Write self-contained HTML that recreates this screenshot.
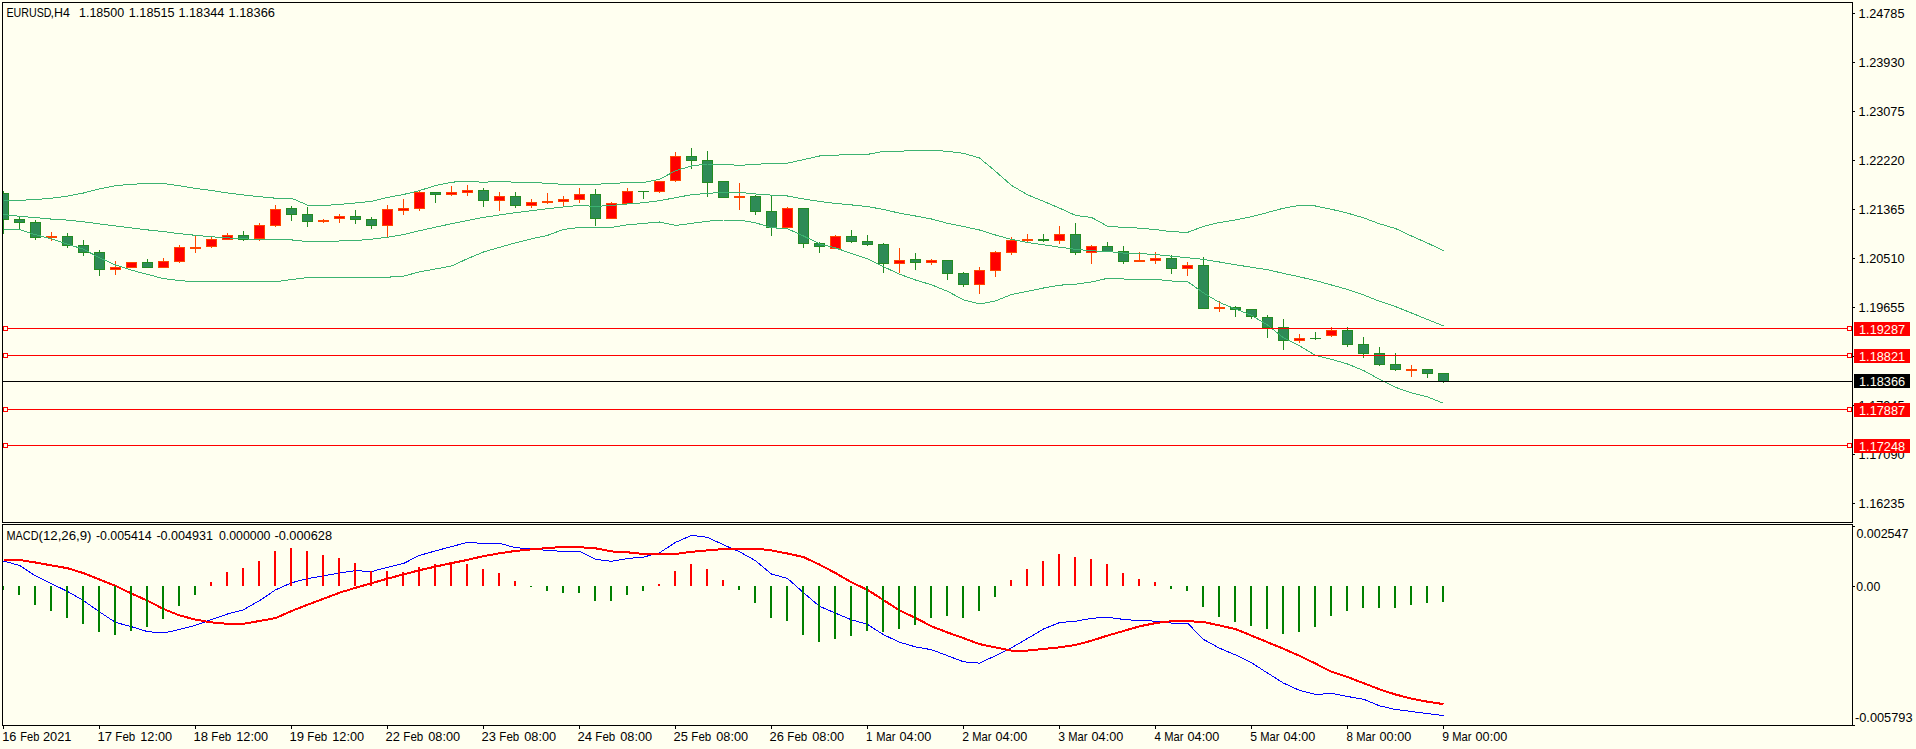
<!DOCTYPE html>
<html><head><meta charset="utf-8"><title>EURUSD,H4</title>
<style>html,body{margin:0;padding:0;background:#FFFFF0;width:1916px;height:749px;overflow:hidden}svg{display:block}</style>
</head><body>
<svg width="1916" height="749" viewBox="0 0 1916 749"><rect x="0" y="0" width="1916" height="749" fill="#FFFFF0"/>
<defs><clipPath id="cm"><rect x="3" y="3" width="1849" height="519"/></clipPath><clipPath id="cs"><rect x="3" y="525" width="1849" height="200"/></clipPath></defs>
<g clip-path="url(#cm)" shape-rendering="crispEdges">
<rect x="3" y="191" width="1" height="43" fill="#228B22"/>
<rect x="-2" y="193" width="11" height="27" fill="#228B22"/>
<rect x="-1" y="194" width="9" height="25" fill="#2E8B57"/>
<rect x="19" y="217" width="1" height="12" fill="#228B22"/>
<rect x="14" y="219" width="11" height="4" fill="#228B22"/>
<rect x="15" y="220" width="9" height="2" fill="#2E8B57"/>
<rect x="35" y="220" width="1" height="20" fill="#228B22"/>
<rect x="30" y="222" width="11" height="16" fill="#228B22"/>
<rect x="31" y="223" width="9" height="14" fill="#2E8B57"/>
<rect x="51" y="232" width="1" height="9" fill="#FF4500"/>
<rect x="46" y="236" width="11" height="2" fill="#FF4500"/>
<rect x="67" y="233" width="1" height="15" fill="#228B22"/>
<rect x="62" y="236" width="11" height="10" fill="#228B22"/>
<rect x="63" y="237" width="9" height="8" fill="#2E8B57"/>
<rect x="83" y="240" width="1" height="16" fill="#228B22"/>
<rect x="78" y="245" width="11" height="8" fill="#228B22"/>
<rect x="79" y="246" width="9" height="6" fill="#2E8B57"/>
<rect x="99" y="250" width="1" height="26" fill="#228B22"/>
<rect x="94" y="252" width="11" height="18" fill="#228B22"/>
<rect x="95" y="253" width="9" height="16" fill="#2E8B57"/>
<rect x="115" y="261" width="1" height="14" fill="#FF4500"/>
<rect x="110" y="267" width="11" height="3" fill="#FF4500"/>
<rect x="111" y="268" width="9" height="1" fill="#FF0000"/>
<rect x="131" y="262" width="1" height="6" fill="#FF4500"/>
<rect x="126" y="262" width="11" height="6" fill="#FF4500"/>
<rect x="127" y="263" width="9" height="4" fill="#FF0000"/>
<rect x="147" y="259" width="1" height="9" fill="#228B22"/>
<rect x="142" y="262" width="11" height="6" fill="#228B22"/>
<rect x="143" y="263" width="9" height="4" fill="#2E8B57"/>
<rect x="163" y="258" width="1" height="10" fill="#FF4500"/>
<rect x="158" y="261" width="11" height="7" fill="#FF4500"/>
<rect x="159" y="262" width="9" height="5" fill="#FF0000"/>
<rect x="179" y="245" width="1" height="18" fill="#FF4500"/>
<rect x="174" y="247" width="11" height="15" fill="#FF4500"/>
<rect x="175" y="248" width="9" height="13" fill="#FF0000"/>
<rect x="195" y="236" width="1" height="17" fill="#FF4500"/>
<rect x="190" y="247" width="11" height="2" fill="#FF4500"/>
<rect x="211" y="237" width="1" height="11" fill="#FF4500"/>
<rect x="206" y="239" width="11" height="8" fill="#FF4500"/>
<rect x="207" y="240" width="9" height="6" fill="#FF0000"/>
<rect x="227" y="233" width="1" height="7" fill="#FF4500"/>
<rect x="222" y="235" width="11" height="5" fill="#FF4500"/>
<rect x="223" y="236" width="9" height="3" fill="#FF0000"/>
<rect x="243" y="231" width="1" height="10" fill="#228B22"/>
<rect x="238" y="235" width="11" height="5" fill="#228B22"/>
<rect x="239" y="236" width="9" height="3" fill="#2E8B57"/>
<rect x="259" y="223" width="1" height="18" fill="#FF4500"/>
<rect x="254" y="225" width="11" height="14" fill="#FF4500"/>
<rect x="255" y="226" width="9" height="12" fill="#FF0000"/>
<rect x="275" y="205" width="1" height="22" fill="#FF4500"/>
<rect x="270" y="209" width="11" height="17" fill="#FF4500"/>
<rect x="271" y="210" width="9" height="15" fill="#FF0000"/>
<rect x="291" y="206" width="1" height="15" fill="#228B22"/>
<rect x="286" y="208" width="11" height="7" fill="#228B22"/>
<rect x="287" y="209" width="9" height="5" fill="#2E8B57"/>
<rect x="307" y="207" width="1" height="20" fill="#228B22"/>
<rect x="302" y="214" width="11" height="8" fill="#228B22"/>
<rect x="303" y="215" width="9" height="6" fill="#2E8B57"/>
<rect x="323" y="219" width="1" height="4" fill="#FF4500"/>
<rect x="318" y="220" width="11" height="2" fill="#FF4500"/>
<rect x="339" y="214" width="1" height="9" fill="#FF4500"/>
<rect x="334" y="216" width="11" height="3" fill="#FF4500"/>
<rect x="335" y="217" width="9" height="1" fill="#FF0000"/>
<rect x="355" y="210" width="1" height="14" fill="#228B22"/>
<rect x="350" y="216" width="11" height="4" fill="#228B22"/>
<rect x="351" y="217" width="9" height="2" fill="#2E8B57"/>
<rect x="371" y="217" width="1" height="12" fill="#228B22"/>
<rect x="366" y="219" width="11" height="7" fill="#228B22"/>
<rect x="367" y="220" width="9" height="5" fill="#2E8B57"/>
<rect x="387" y="205" width="1" height="32" fill="#FF4500"/>
<rect x="382" y="209" width="11" height="17" fill="#FF4500"/>
<rect x="383" y="210" width="9" height="15" fill="#FF0000"/>
<rect x="403" y="199" width="1" height="16" fill="#FF4500"/>
<rect x="398" y="208" width="11" height="3" fill="#FF4500"/>
<rect x="399" y="209" width="9" height="1" fill="#FF0000"/>
<rect x="419" y="191" width="1" height="20" fill="#FF4500"/>
<rect x="414" y="192" width="11" height="17" fill="#FF4500"/>
<rect x="415" y="193" width="9" height="15" fill="#FF0000"/>
<rect x="435" y="192" width="1" height="11" fill="#228B22"/>
<rect x="430" y="192" width="11" height="3" fill="#228B22"/>
<rect x="431" y="193" width="9" height="1" fill="#2E8B57"/>
<rect x="451" y="186" width="1" height="10" fill="#FF4500"/>
<rect x="446" y="192" width="11" height="3" fill="#FF4500"/>
<rect x="447" y="193" width="9" height="1" fill="#FF0000"/>
<rect x="467" y="185" width="1" height="11" fill="#FF4500"/>
<rect x="462" y="190" width="11" height="3" fill="#FF4500"/>
<rect x="463" y="191" width="9" height="1" fill="#FF0000"/>
<rect x="483" y="188" width="1" height="19" fill="#228B22"/>
<rect x="478" y="190" width="11" height="11" fill="#228B22"/>
<rect x="479" y="191" width="9" height="9" fill="#2E8B57"/>
<rect x="499" y="192" width="1" height="19" fill="#FF4500"/>
<rect x="494" y="196" width="11" height="5" fill="#FF4500"/>
<rect x="495" y="197" width="9" height="3" fill="#FF0000"/>
<rect x="515" y="192" width="1" height="16" fill="#228B22"/>
<rect x="510" y="196" width="11" height="10" fill="#228B22"/>
<rect x="511" y="197" width="9" height="8" fill="#2E8B57"/>
<rect x="531" y="199" width="1" height="9" fill="#FF4500"/>
<rect x="526" y="202" width="11" height="4" fill="#FF4500"/>
<rect x="527" y="203" width="9" height="2" fill="#FF0000"/>
<rect x="547" y="193" width="1" height="11" fill="#FF4500"/>
<rect x="542" y="201" width="11" height="2" fill="#FF4500"/>
<rect x="563" y="196" width="1" height="10" fill="#FF4500"/>
<rect x="558" y="199" width="11" height="3" fill="#FF4500"/>
<rect x="559" y="200" width="9" height="1" fill="#FF0000"/>
<rect x="579" y="188" width="1" height="15" fill="#FF4500"/>
<rect x="574" y="194" width="11" height="6" fill="#FF4500"/>
<rect x="575" y="195" width="9" height="4" fill="#FF0000"/>
<rect x="595" y="189" width="1" height="37" fill="#228B22"/>
<rect x="590" y="194" width="11" height="25" fill="#228B22"/>
<rect x="591" y="195" width="9" height="23" fill="#2E8B57"/>
<rect x="611" y="202" width="1" height="17" fill="#FF4500"/>
<rect x="606" y="203" width="11" height="16" fill="#FF4500"/>
<rect x="607" y="204" width="9" height="14" fill="#FF0000"/>
<rect x="627" y="188" width="1" height="16" fill="#FF4500"/>
<rect x="622" y="191" width="11" height="13" fill="#FF4500"/>
<rect x="623" y="192" width="9" height="11" fill="#FF0000"/>
<rect x="643" y="191" width="1" height="8" fill="#228B22"/>
<rect x="638" y="191" width="11" height="1" fill="#228B22"/>
<rect x="659" y="181" width="1" height="12" fill="#FF4500"/>
<rect x="654" y="181" width="11" height="11" fill="#FF4500"/>
<rect x="655" y="182" width="9" height="9" fill="#FF0000"/>
<rect x="675" y="152" width="1" height="30" fill="#FF4500"/>
<rect x="670" y="156" width="11" height="25" fill="#FF4500"/>
<rect x="671" y="157" width="9" height="23" fill="#FF0000"/>
<rect x="691" y="148" width="1" height="21" fill="#228B22"/>
<rect x="686" y="156" width="11" height="5" fill="#228B22"/>
<rect x="687" y="157" width="9" height="3" fill="#2E8B57"/>
<rect x="707" y="151" width="1" height="46" fill="#228B22"/>
<rect x="702" y="160" width="11" height="23" fill="#228B22"/>
<rect x="703" y="161" width="9" height="21" fill="#2E8B57"/>
<rect x="723" y="181" width="1" height="17" fill="#228B22"/>
<rect x="718" y="181" width="11" height="17" fill="#228B22"/>
<rect x="719" y="182" width="9" height="15" fill="#2E8B57"/>
<rect x="739" y="183" width="1" height="27" fill="#FF4500"/>
<rect x="734" y="196" width="11" height="2" fill="#FF4500"/>
<rect x="755" y="195" width="1" height="20" fill="#228B22"/>
<rect x="750" y="196" width="11" height="16" fill="#228B22"/>
<rect x="751" y="197" width="9" height="14" fill="#2E8B57"/>
<rect x="771" y="195" width="1" height="41" fill="#228B22"/>
<rect x="766" y="211" width="11" height="17" fill="#228B22"/>
<rect x="767" y="212" width="9" height="15" fill="#2E8B57"/>
<rect x="787" y="207" width="1" height="22" fill="#FF4500"/>
<rect x="782" y="208" width="11" height="20" fill="#FF4500"/>
<rect x="783" y="209" width="9" height="18" fill="#FF0000"/>
<rect x="803" y="208" width="1" height="40" fill="#228B22"/>
<rect x="798" y="208" width="11" height="36" fill="#228B22"/>
<rect x="799" y="209" width="9" height="34" fill="#2E8B57"/>
<rect x="819" y="242" width="1" height="11" fill="#228B22"/>
<rect x="814" y="243" width="11" height="4" fill="#228B22"/>
<rect x="815" y="244" width="9" height="2" fill="#2E8B57"/>
<rect x="835" y="235" width="1" height="14" fill="#FF4500"/>
<rect x="830" y="236" width="11" height="13" fill="#FF4500"/>
<rect x="831" y="237" width="9" height="11" fill="#FF0000"/>
<rect x="851" y="230" width="1" height="13" fill="#228B22"/>
<rect x="846" y="236" width="11" height="6" fill="#228B22"/>
<rect x="847" y="237" width="9" height="4" fill="#2E8B57"/>
<rect x="867" y="235" width="1" height="11" fill="#228B22"/>
<rect x="862" y="241" width="11" height="4" fill="#228B22"/>
<rect x="863" y="242" width="9" height="2" fill="#2E8B57"/>
<rect x="883" y="243" width="1" height="30" fill="#228B22"/>
<rect x="878" y="244" width="11" height="20" fill="#228B22"/>
<rect x="879" y="245" width="9" height="18" fill="#2E8B57"/>
<rect x="899" y="248" width="1" height="25" fill="#FF4500"/>
<rect x="894" y="260" width="11" height="4" fill="#FF4500"/>
<rect x="895" y="261" width="9" height="2" fill="#FF0000"/>
<rect x="915" y="253" width="1" height="17" fill="#228B22"/>
<rect x="910" y="259" width="11" height="4" fill="#228B22"/>
<rect x="911" y="260" width="9" height="2" fill="#2E8B57"/>
<rect x="931" y="259" width="1" height="6" fill="#FF4500"/>
<rect x="926" y="260" width="11" height="3" fill="#FF4500"/>
<rect x="927" y="261" width="9" height="1" fill="#FF0000"/>
<rect x="947" y="260" width="1" height="20" fill="#228B22"/>
<rect x="942" y="260" width="11" height="14" fill="#228B22"/>
<rect x="943" y="261" width="9" height="12" fill="#2E8B57"/>
<rect x="963" y="272" width="1" height="15" fill="#228B22"/>
<rect x="958" y="273" width="11" height="12" fill="#228B22"/>
<rect x="959" y="274" width="9" height="10" fill="#2E8B57"/>
<rect x="979" y="267" width="1" height="27" fill="#FF4500"/>
<rect x="974" y="270" width="11" height="15" fill="#FF4500"/>
<rect x="975" y="271" width="9" height="13" fill="#FF0000"/>
<rect x="995" y="251" width="1" height="26" fill="#FF4500"/>
<rect x="990" y="252" width="11" height="19" fill="#FF4500"/>
<rect x="991" y="253" width="9" height="17" fill="#FF0000"/>
<rect x="1011" y="237" width="1" height="18" fill="#FF4500"/>
<rect x="1006" y="240" width="11" height="13" fill="#FF4500"/>
<rect x="1007" y="241" width="9" height="11" fill="#FF0000"/>
<rect x="1027" y="234" width="1" height="8" fill="#FF4500"/>
<rect x="1022" y="239" width="11" height="2" fill="#FF4500"/>
<rect x="1043" y="234" width="1" height="8" fill="#228B22"/>
<rect x="1038" y="239" width="11" height="2" fill="#228B22"/>
<rect x="1059" y="226" width="1" height="18" fill="#FF4500"/>
<rect x="1054" y="234" width="11" height="7" fill="#FF4500"/>
<rect x="1055" y="235" width="9" height="5" fill="#FF0000"/>
<rect x="1075" y="223" width="1" height="32" fill="#228B22"/>
<rect x="1070" y="234" width="11" height="19" fill="#228B22"/>
<rect x="1071" y="235" width="9" height="17" fill="#2E8B57"/>
<rect x="1091" y="245" width="1" height="19" fill="#FF4500"/>
<rect x="1086" y="246" width="11" height="7" fill="#FF4500"/>
<rect x="1087" y="247" width="9" height="5" fill="#FF0000"/>
<rect x="1107" y="242" width="1" height="10" fill="#228B22"/>
<rect x="1102" y="246" width="11" height="6" fill="#228B22"/>
<rect x="1103" y="247" width="9" height="4" fill="#2E8B57"/>
<rect x="1123" y="246" width="1" height="18" fill="#228B22"/>
<rect x="1118" y="251" width="11" height="11" fill="#228B22"/>
<rect x="1119" y="252" width="9" height="9" fill="#2E8B57"/>
<rect x="1139" y="252" width="1" height="10" fill="#FF4500"/>
<rect x="1134" y="260" width="11" height="2" fill="#FF4500"/>
<rect x="1155" y="252" width="1" height="12" fill="#FF4500"/>
<rect x="1150" y="258" width="11" height="3" fill="#FF4500"/>
<rect x="1151" y="259" width="9" height="1" fill="#FF0000"/>
<rect x="1171" y="255" width="1" height="19" fill="#228B22"/>
<rect x="1166" y="258" width="11" height="11" fill="#228B22"/>
<rect x="1167" y="259" width="9" height="9" fill="#2E8B57"/>
<rect x="1187" y="262" width="1" height="14" fill="#FF4500"/>
<rect x="1182" y="265" width="11" height="4" fill="#FF4500"/>
<rect x="1183" y="266" width="9" height="2" fill="#FF0000"/>
<rect x="1203" y="257" width="1" height="52" fill="#228B22"/>
<rect x="1198" y="265" width="11" height="44" fill="#228B22"/>
<rect x="1199" y="266" width="9" height="42" fill="#2E8B57"/>
<rect x="1219" y="301" width="1" height="11" fill="#FF4500"/>
<rect x="1214" y="307" width="11" height="2" fill="#FF4500"/>
<rect x="1235" y="306" width="1" height="11" fill="#228B22"/>
<rect x="1230" y="307" width="11" height="3" fill="#228B22"/>
<rect x="1231" y="308" width="9" height="1" fill="#2E8B57"/>
<rect x="1251" y="309" width="1" height="10" fill="#228B22"/>
<rect x="1246" y="309" width="11" height="8" fill="#228B22"/>
<rect x="1247" y="310" width="9" height="6" fill="#2E8B57"/>
<rect x="1267" y="315" width="1" height="23" fill="#228B22"/>
<rect x="1262" y="317" width="11" height="11" fill="#228B22"/>
<rect x="1263" y="318" width="9" height="9" fill="#2E8B57"/>
<rect x="1283" y="319" width="1" height="31" fill="#228B22"/>
<rect x="1278" y="327" width="11" height="14" fill="#228B22"/>
<rect x="1279" y="328" width="9" height="12" fill="#2E8B57"/>
<rect x="1299" y="334" width="1" height="9" fill="#FF4500"/>
<rect x="1294" y="338" width="11" height="3" fill="#FF4500"/>
<rect x="1295" y="339" width="9" height="1" fill="#FF0000"/>
<rect x="1315" y="332" width="1" height="8" fill="#228B22"/>
<rect x="1310" y="338" width="11" height="1" fill="#228B22"/>
<rect x="1331" y="327" width="1" height="10" fill="#FF4500"/>
<rect x="1326" y="330" width="11" height="6" fill="#FF4500"/>
<rect x="1327" y="331" width="9" height="4" fill="#FF0000"/>
<rect x="1347" y="327" width="1" height="20" fill="#228B22"/>
<rect x="1342" y="330" width="11" height="15" fill="#228B22"/>
<rect x="1343" y="331" width="9" height="13" fill="#2E8B57"/>
<rect x="1363" y="337" width="1" height="21" fill="#228B22"/>
<rect x="1358" y="344" width="11" height="10" fill="#228B22"/>
<rect x="1359" y="345" width="9" height="8" fill="#2E8B57"/>
<rect x="1379" y="347" width="1" height="19" fill="#228B22"/>
<rect x="1374" y="353" width="11" height="12" fill="#228B22"/>
<rect x="1375" y="354" width="9" height="10" fill="#2E8B57"/>
<rect x="1395" y="353" width="1" height="18" fill="#228B22"/>
<rect x="1390" y="364" width="11" height="6" fill="#228B22"/>
<rect x="1391" y="365" width="9" height="4" fill="#2E8B57"/>
<rect x="1411" y="365" width="1" height="12" fill="#FF4500"/>
<rect x="1406" y="369" width="11" height="2" fill="#FF4500"/>
<rect x="1427" y="369" width="1" height="9" fill="#228B22"/>
<rect x="1422" y="369" width="11" height="5" fill="#228B22"/>
<rect x="1423" y="370" width="9" height="3" fill="#2E8B57"/>
<rect x="1443" y="373" width="1" height="10" fill="#228B22"/>
<rect x="1438" y="373" width="11" height="9" fill="#228B22"/>
<rect x="1439" y="374" width="9" height="7" fill="#2E8B57"/>
</g>
<polyline clip-path="url(#cm)" points="3.5,200.3 19.5,200.3 35.5,199.6 51.5,198.2 67.5,196.1 83.5,193.0 99.5,188.8 115.5,185.7 131.5,184.2 147.5,183.6 163.5,183.6 179.5,185.7 195.5,188.5 211.5,190.5 227.5,193.0 243.5,195.0 259.5,196.7 275.5,198.2 291.5,198.2 307.5,205.1 323.5,205.5 339.5,204.4 355.5,203.0 371.5,201.3 387.5,197.4 403.5,194.5 419.5,190.6 435.5,185.5 451.5,182.2 467.5,181.2 483.5,182.3 499.5,181.3 515.5,182.3 531.5,182.3 547.5,183.4 563.5,184.3 579.5,184.3 595.5,184.3 611.5,183.4 627.5,182.7 643.5,182.5 659.5,179.4 675.5,170.7 691.5,166.0 707.5,164.0 723.5,164.3 739.5,165.4 755.5,164.3 771.5,163.5 787.5,163.2 803.5,159.6 819.5,156.0 835.5,155.2 851.5,154.4 867.5,154.4 883.5,151.3 899.5,151.3 915.5,150.3 931.5,150.3 947.5,151.3 963.5,153.3 979.5,158.0 995.5,171.3 1011.5,185.4 1027.5,194.8 1043.5,201.3 1059.5,208.1 1075.5,215.4 1091.5,217.4 1107.5,226.2 1123.5,227.4 1139.5,228.1 1155.5,229.6 1171.5,231.7 1187.5,232.4 1203.5,226.4 1219.5,222.5 1235.5,220.0 1251.5,216.7 1267.5,212.5 1283.5,208.2 1299.5,205.4 1315.5,206.0 1331.5,209.3 1347.5,213.1 1363.5,217.8 1379.5,223.8 1395.5,228.5 1411.5,236.0 1427.5,243.1 1443.5,250.6" fill="none" stroke="#3CB371" stroke-width="1" shape-rendering="crispEdges" stroke-linejoin="round"/>
<polyline clip-path="url(#cm)" points="3.5,214.5 19.5,216.3 35.5,217.6 51.5,219.1 67.5,220.1 83.5,221.8 99.5,223.9 115.5,225.9 131.5,228.0 147.5,229.9 163.5,231.6 179.5,233.7 195.5,235.3 211.5,236.8 227.5,237.8 243.5,238.9 259.5,239.3 275.5,239.5 291.5,239.9 307.5,241.6 323.5,241.6 339.5,241.0 355.5,240.6 371.5,239.2 387.5,237.2 403.5,234.6 419.5,230.7 435.5,227.2 451.5,223.7 467.5,220.5 483.5,217.4 499.5,215.0 515.5,212.7 531.5,210.7 547.5,208.7 563.5,207.0 579.5,205.4 595.5,206.4 611.5,205.4 627.5,204.0 643.5,202.7 659.5,200.7 675.5,197.7 691.5,194.7 707.5,193.4 723.5,192.3 739.5,192.3 755.5,194.0 771.5,195.1 787.5,196.0 803.5,199.0 819.5,201.4 835.5,203.4 851.5,204.9 867.5,206.6 883.5,209.4 899.5,213.2 915.5,216.0 931.5,219.0 947.5,223.3 963.5,226.5 979.5,230.0 995.5,235.0 1011.5,239.4 1027.5,242.5 1043.5,244.7 1059.5,247.2 1075.5,249.3 1091.5,250.8 1107.5,251.5 1123.5,253.1 1139.5,253.6 1155.5,254.5 1171.5,256.2 1187.5,257.7 1203.5,259.4 1219.5,262.0 1235.5,264.7 1251.5,267.3 1267.5,269.7 1283.5,273.4 1299.5,276.8 1315.5,280.6 1331.5,285.0 1347.5,289.5 1363.5,294.9 1379.5,301.3 1395.5,306.6 1411.5,313.0 1427.5,319.5 1443.5,325.9" fill="none" stroke="#3CB371" stroke-width="1" shape-rendering="crispEdges" stroke-linejoin="round"/>
<polyline clip-path="url(#cm)" points="3.5,229.5 19.5,229.5 35.5,234.7 51.5,238.9 67.5,244.1 83.5,249.3 99.5,257.7 115.5,265.0 131.5,270.2 147.5,274.4 163.5,278.6 179.5,280.6 195.5,281.7 211.5,281.7 227.5,281.7 243.5,281.7 259.5,281.7 275.5,281.7 291.5,279.6 307.5,277.5 323.5,277.5 339.5,277.5 355.5,277.5 371.5,277.2 387.5,277.2 403.5,276.2 419.5,271.8 435.5,269.0 451.5,266.0 467.5,258.7 483.5,252.0 499.5,247.4 515.5,242.8 531.5,238.8 547.5,235.4 563.5,229.4 579.5,227.4 595.5,228.0 611.5,227.4 627.5,224.8 643.5,223.4 659.5,222.0 675.5,225.4 691.5,223.4 707.5,221.2 723.5,220.0 739.5,220.0 755.5,222.8 771.5,227.7 787.5,228.7 803.5,236.0 819.5,243.8 835.5,248.0 851.5,253.4 867.5,258.7 883.5,266.7 899.5,274.2 915.5,280.0 931.5,284.8 947.5,291.3 963.5,299.8 979.5,304.0 995.5,300.9 1011.5,294.5 1027.5,291.3 1043.5,288.0 1059.5,285.2 1075.5,284.2 1091.5,282.0 1107.5,278.3 1123.5,279.0 1139.5,279.9 1155.5,279.4 1171.5,281.0 1187.5,281.5 1203.5,292.9 1219.5,302.5 1235.5,308.9 1251.5,315.3 1267.5,325.0 1283.5,337.8 1299.5,345.8 1315.5,355.3 1331.5,359.3 1347.5,364.0 1363.5,370.5 1379.5,379.3 1395.5,387.3 1411.5,392.9 1427.5,396.9 1443.5,403.3" fill="none" stroke="#3CB371" stroke-width="1" shape-rendering="crispEdges" stroke-linejoin="round"/>
<g shape-rendering="crispEdges">
<rect x="3" y="328" width="1849" height="1" fill="#FF0000"/>
<rect x="3" y="326" width="5" height="5" fill="#FF0000"/>
<rect x="4" y="327" width="3" height="3" fill="#FFFFF0"/>
<rect x="1847" y="326" width="5" height="5" fill="#FF0000"/>
<rect x="1848" y="327" width="3" height="3" fill="#FFFFF0"/>
<rect x="3" y="355" width="1849" height="1" fill="#FF0000"/>
<rect x="3" y="353" width="5" height="5" fill="#FF0000"/>
<rect x="4" y="354" width="3" height="3" fill="#FFFFF0"/>
<rect x="1847" y="353" width="5" height="5" fill="#FF0000"/>
<rect x="1848" y="354" width="3" height="3" fill="#FFFFF0"/>
<rect x="3" y="409" width="1849" height="1" fill="#FF0000"/>
<rect x="3" y="407" width="5" height="5" fill="#FF0000"/>
<rect x="4" y="408" width="3" height="3" fill="#FFFFF0"/>
<rect x="1847" y="407" width="5" height="5" fill="#FF0000"/>
<rect x="1848" y="408" width="3" height="3" fill="#FFFFF0"/>
<rect x="3" y="445" width="1849" height="1" fill="#FF0000"/>
<rect x="3" y="443" width="5" height="5" fill="#FF0000"/>
<rect x="4" y="444" width="3" height="3" fill="#FFFFF0"/>
<rect x="1847" y="443" width="5" height="5" fill="#FF0000"/>
<rect x="1848" y="444" width="3" height="3" fill="#FFFFF0"/>
<rect x="3" y="381" width="1849" height="1" fill="#000000"/>
</g>
<g clip-path="url(#cs)">
<polyline clip-path="url(#cs)" points="3.5,561.1 19.5,565.4 35.5,575.9 51.5,583.7 67.5,591.4 83.5,600.6 99.5,611.9 115.5,622.4 131.5,626.7 147.5,631.6 163.5,633.0 179.5,629.5 195.5,625.3 211.5,619.6 227.5,614.0 243.5,609.8 259.5,600.6 275.5,589.9 291.5,582.8 307.5,578.6 323.5,575.8 339.5,573.0 355.5,570.6 371.5,571.6 387.5,567.3 403.5,563.5 419.5,555.4 435.5,550.9 451.5,546.6 467.5,542.4 483.5,543.4 499.5,543.4 515.5,547.6 531.5,549.0 547.5,550.4 563.5,551.4 579.5,551.4 595.5,559.3 611.5,561.3 627.5,558.5 643.5,557.1 659.5,552.8 675.5,542.4 691.5,535.4 707.5,537.3 723.5,544.8 739.5,551.8 755.5,560.7 771.5,574.0 787.5,578.4 803.5,592.6 819.5,606.3 835.5,613.2 851.5,619.8 867.5,624.4 883.5,634.7 899.5,642.2 915.5,646.9 931.5,649.7 947.5,655.7 963.5,661.8 979.5,663.1 995.5,655.7 1011.5,647.8 1027.5,638.5 1043.5,629.0 1059.5,622.6 1075.5,621.2 1091.5,618.3 1107.5,617.3 1123.5,619.4 1139.5,620.7 1155.5,621.1 1171.5,623.1 1187.5,623.1 1203.5,639.4 1219.5,648.2 1235.5,654.9 1251.5,662.8 1267.5,673.0 1283.5,683.1 1299.5,690.3 1315.5,694.5 1331.5,693.4 1347.5,696.5 1363.5,699.2 1379.5,705.8 1395.5,709.5 1411.5,711.5 1427.5,713.6 1443.5,715.6" fill="none" stroke="#0000FF" stroke-width="1" shape-rendering="crispEdges" stroke-linejoin="round"/>
<polyline clip-path="url(#cs)" points="3.5,560.0 19.5,560.0 35.5,562.5 51.5,565.4 67.5,568.2 83.5,573.1 99.5,579.5 115.5,585.8 131.5,593.6 147.5,600.6 163.5,609.0 179.5,615.4 195.5,619.6 211.5,622.4 227.5,623.8 243.5,623.8 259.5,621.0 275.5,618.1 291.5,611.0 307.5,604.7 323.5,598.8 339.5,592.7 355.5,587.8 371.5,583.3 387.5,578.6 403.5,574.4 419.5,570.2 435.5,566.6 451.5,563.1 467.5,559.9 483.5,556.1 499.5,553.3 515.5,550.9 531.5,549.4 547.5,548.0 563.5,546.9 579.5,547.2 595.5,548.3 611.5,551.4 627.5,552.3 643.5,554.0 659.5,554.0 675.5,554.0 691.5,551.8 707.5,550.4 723.5,549.0 739.5,548.6 755.5,548.6 771.5,550.4 787.5,553.5 803.5,557.1 819.5,564.6 835.5,573.0 851.5,582.4 867.5,589.8 883.5,600.1 899.5,610.4 915.5,617.9 931.5,626.3 947.5,632.5 963.5,638.1 979.5,644.1 995.5,647.4 1011.5,650.6 1027.5,650.6 1043.5,648.9 1059.5,647.4 1075.5,645.0 1091.5,640.7 1107.5,635.6 1123.5,631.0 1139.5,626.3 1155.5,623.1 1171.5,621.2 1187.5,621.2 1203.5,622.0 1219.5,625.4 1235.5,629.1 1251.5,635.6 1267.5,642.2 1283.5,648.8 1299.5,655.8 1315.5,663.6 1331.5,671.8 1347.5,677.0 1363.5,683.1 1379.5,689.3 1395.5,694.5 1411.5,698.6 1427.5,701.7 1443.5,704.1" fill="none" stroke="#FF0000" stroke-width="2" shape-rendering="crispEdges" stroke-linejoin="round"/>
<g shape-rendering="crispEdges">
<rect x="2" y="586" width="2" height="4" fill="#008000"/>
<rect x="18" y="586" width="2" height="9" fill="#008000"/>
<rect x="34" y="586" width="2" height="19" fill="#008000"/>
<rect x="50" y="586" width="2" height="25" fill="#008000"/>
<rect x="66" y="586" width="2" height="32" fill="#008000"/>
<rect x="82" y="586" width="2" height="38" fill="#008000"/>
<rect x="98" y="586" width="2" height="46" fill="#008000"/>
<rect x="114" y="586" width="2" height="49" fill="#008000"/>
<rect x="130" y="586" width="2" height="45" fill="#008000"/>
<rect x="146" y="586" width="2" height="41" fill="#008000"/>
<rect x="162" y="586" width="2" height="33" fill="#008000"/>
<rect x="178" y="586" width="2" height="20" fill="#008000"/>
<rect x="194" y="586" width="2" height="9" fill="#008000"/>
<rect x="210" y="582" width="2" height="4" fill="#FF0000"/>
<rect x="226" y="572" width="2" height="14" fill="#FF0000"/>
<rect x="242" y="568" width="2" height="18" fill="#FF0000"/>
<rect x="258" y="561" width="2" height="25" fill="#FF0000"/>
<rect x="274" y="551" width="2" height="35" fill="#FF0000"/>
<rect x="290" y="548" width="2" height="38" fill="#FF0000"/>
<rect x="306" y="551" width="2" height="35" fill="#FF0000"/>
<rect x="322" y="555" width="2" height="31" fill="#FF0000"/>
<rect x="338" y="558" width="2" height="28" fill="#FF0000"/>
<rect x="354" y="563" width="2" height="23" fill="#FF0000"/>
<rect x="370" y="571" width="2" height="15" fill="#FF0000"/>
<rect x="386" y="571" width="2" height="15" fill="#FF0000"/>
<rect x="402" y="572" width="2" height="14" fill="#FF0000"/>
<rect x="418" y="567" width="2" height="19" fill="#FF0000"/>
<rect x="434" y="564" width="2" height="22" fill="#FF0000"/>
<rect x="450" y="563" width="2" height="23" fill="#FF0000"/>
<rect x="466" y="564" width="2" height="22" fill="#FF0000"/>
<rect x="482" y="569" width="2" height="17" fill="#FF0000"/>
<rect x="498" y="573" width="2" height="13" fill="#FF0000"/>
<rect x="514" y="581" width="2" height="5" fill="#FF0000"/>
<rect x="530" y="586" width="2" height="1" fill="#008000"/>
<rect x="546" y="586" width="2" height="5" fill="#008000"/>
<rect x="562" y="586" width="2" height="7" fill="#008000"/>
<rect x="578" y="586" width="2" height="7" fill="#008000"/>
<rect x="594" y="586" width="2" height="15" fill="#008000"/>
<rect x="610" y="586" width="2" height="15" fill="#008000"/>
<rect x="626" y="586" width="2" height="9" fill="#008000"/>
<rect x="642" y="586" width="2" height="5" fill="#008000"/>
<rect x="658" y="584" width="2" height="2" fill="#FF0000"/>
<rect x="674" y="571" width="2" height="15" fill="#FF0000"/>
<rect x="690" y="564" width="2" height="22" fill="#FF0000"/>
<rect x="706" y="569" width="2" height="17" fill="#FF0000"/>
<rect x="722" y="580" width="2" height="6" fill="#FF0000"/>
<rect x="738" y="586" width="2" height="4" fill="#008000"/>
<rect x="754" y="586" width="2" height="17" fill="#008000"/>
<rect x="770" y="586" width="2" height="32" fill="#008000"/>
<rect x="786" y="586" width="2" height="35" fill="#008000"/>
<rect x="802" y="586" width="2" height="49" fill="#008000"/>
<rect x="818" y="586" width="2" height="56" fill="#008000"/>
<rect x="834" y="586" width="2" height="53" fill="#008000"/>
<rect x="850" y="586" width="2" height="50" fill="#008000"/>
<rect x="866" y="586" width="2" height="45" fill="#008000"/>
<rect x="882" y="586" width="2" height="46" fill="#008000"/>
<rect x="898" y="586" width="2" height="43" fill="#008000"/>
<rect x="914" y="586" width="2" height="39" fill="#008000"/>
<rect x="930" y="586" width="2" height="32" fill="#008000"/>
<rect x="946" y="586" width="2" height="30" fill="#008000"/>
<rect x="962" y="586" width="2" height="32" fill="#008000"/>
<rect x="978" y="586" width="2" height="25" fill="#008000"/>
<rect x="994" y="586" width="2" height="11" fill="#008000"/>
<rect x="1010" y="580" width="2" height="6" fill="#FF0000"/>
<rect x="1026" y="569" width="2" height="17" fill="#FF0000"/>
<rect x="1042" y="561" width="2" height="25" fill="#FF0000"/>
<rect x="1058" y="554" width="2" height="32" fill="#FF0000"/>
<rect x="1074" y="557" width="2" height="29" fill="#FF0000"/>
<rect x="1090" y="559" width="2" height="27" fill="#FF0000"/>
<rect x="1106" y="564" width="2" height="22" fill="#FF0000"/>
<rect x="1122" y="573" width="2" height="13" fill="#FF0000"/>
<rect x="1138" y="579" width="2" height="7" fill="#FF0000"/>
<rect x="1154" y="582" width="2" height="4" fill="#FF0000"/>
<rect x="1170" y="586" width="2" height="3" fill="#008000"/>
<rect x="1186" y="586" width="2" height="5" fill="#008000"/>
<rect x="1202" y="586" width="2" height="21" fill="#008000"/>
<rect x="1218" y="586" width="2" height="31" fill="#008000"/>
<rect x="1234" y="586" width="2" height="36" fill="#008000"/>
<rect x="1250" y="586" width="2" height="40" fill="#008000"/>
<rect x="1266" y="586" width="2" height="43" fill="#008000"/>
<rect x="1282" y="586" width="2" height="48" fill="#008000"/>
<rect x="1298" y="586" width="2" height="46" fill="#008000"/>
<rect x="1314" y="586" width="2" height="41" fill="#008000"/>
<rect x="1330" y="586" width="2" height="30" fill="#008000"/>
<rect x="1346" y="586" width="2" height="25" fill="#008000"/>
<rect x="1362" y="586" width="2" height="22" fill="#008000"/>
<rect x="1378" y="586" width="2" height="22" fill="#008000"/>
<rect x="1394" y="586" width="2" height="22" fill="#008000"/>
<rect x="1410" y="586" width="2" height="19" fill="#008000"/>
<rect x="1426" y="586" width="2" height="17" fill="#008000"/>
<rect x="1442" y="586" width="2" height="16" fill="#008000"/>
</g></g>
<g shape-rendering="crispEdges" fill="#000">
<rect x="2" y="2" width="1851" height="1"/>
<rect x="2" y="522" width="1851" height="1"/>
<rect x="2" y="2" width="1" height="521"/>
<rect x="1852" y="2" width="1" height="521"/>
<rect x="2" y="524" width="1851" height="1"/>
<rect x="2" y="725" width="1851" height="1"/>
<rect x="2" y="524" width="1" height="202"/>
<rect x="1852" y="524" width="1" height="202"/>
<rect x="1853" y="13" width="2" height="1"/>
<rect x="1853" y="62" width="2" height="1"/>
<rect x="1853" y="111" width="2" height="1"/>
<rect x="1853" y="160" width="2" height="1"/>
<rect x="1853" y="209" width="2" height="1"/>
<rect x="1853" y="258" width="2" height="1"/>
<rect x="1853" y="307" width="2" height="1"/>
<rect x="1853" y="356" width="2" height="1"/>
<rect x="1853" y="405" width="2" height="1"/>
<rect x="1853" y="454" width="2" height="1"/>
<rect x="1853" y="503" width="2" height="1"/>
<rect x="1853" y="526" width="2" height="1"/>
<rect x="1853" y="586" width="2" height="1"/>
<rect x="1853" y="725" width="2" height="1"/>
<rect x="3" y="726" width="1" height="3"/>
<rect x="99" y="726" width="1" height="3"/>
<rect x="195" y="726" width="1" height="3"/>
<rect x="291" y="726" width="1" height="3"/>
<rect x="387" y="726" width="1" height="3"/>
<rect x="483" y="726" width="1" height="3"/>
<rect x="579" y="726" width="1" height="3"/>
<rect x="675" y="726" width="1" height="3"/>
<rect x="771" y="726" width="1" height="3"/>
<rect x="867" y="726" width="1" height="3"/>
<rect x="963" y="726" width="1" height="3"/>
<rect x="1059" y="726" width="1" height="3"/>
<rect x="1155" y="726" width="1" height="3"/>
<rect x="1251" y="726" width="1" height="3"/>
<rect x="1347" y="726" width="1" height="3"/>
<rect x="1443" y="726" width="1" height="3"/>
</g>
<g font-family='"Liberation Sans", sans-serif' font-size="12.6">
<text x="6.48" y="17" textLength="45.04" lengthAdjust="spacingAndGlyphs" fill="#000">EURUSD</text>
<text x="50.56" y="17" textLength="19.24" lengthAdjust="spacingAndGlyphs" fill="#000">,H4</text>
<text x="79.01" y="17" textLength="45.09" lengthAdjust="spacingAndGlyphs" fill="#000">1.18500</text>
<text x="128.79" y="17" textLength="45.82" lengthAdjust="spacingAndGlyphs" fill="#000">1.18515</text>
<text x="178.46" y="17" textLength="45.87" lengthAdjust="spacingAndGlyphs" fill="#000">1.18344</text>
<text x="228.56" y="17" textLength="46.36" lengthAdjust="spacingAndGlyphs" fill="#000">1.18366</text>
<text x="6.48" y="540" textLength="32.04" lengthAdjust="spacingAndGlyphs" fill="#000">MACD</text>
<text x="38.50" y="540" textLength="53.00" lengthAdjust="spacingAndGlyphs" fill="#000">(12,26,9)</text>
<text x="95.91" y="540" textLength="55.69" lengthAdjust="spacingAndGlyphs" fill="#000">-0.005414</text>
<text x="156.38" y="540" textLength="56.65" lengthAdjust="spacingAndGlyphs" fill="#000">-0.004931</text>
<text x="218.89" y="540" textLength="51.60" lengthAdjust="spacingAndGlyphs" fill="#000">0.000000</text>
<text x="274.45" y="540" textLength="57.59" lengthAdjust="spacingAndGlyphs" fill="#000">-0.000628</text>
<text x="1858.59" y="18" textLength="45.92" lengthAdjust="spacingAndGlyphs" fill="#000">1.24785</text>
<text x="1858.59" y="67" textLength="45.94" lengthAdjust="spacingAndGlyphs" fill="#000">1.23930</text>
<text x="1858.59" y="116" textLength="45.92" lengthAdjust="spacingAndGlyphs" fill="#000">1.23075</text>
<text x="1858.59" y="165" textLength="45.94" lengthAdjust="spacingAndGlyphs" fill="#000">1.22220</text>
<text x="1858.59" y="214" textLength="45.92" lengthAdjust="spacingAndGlyphs" fill="#000">1.21365</text>
<text x="1858.59" y="263" textLength="45.94" lengthAdjust="spacingAndGlyphs" fill="#000">1.20510</text>
<text x="1858.59" y="312" textLength="45.92" lengthAdjust="spacingAndGlyphs" fill="#000">1.19655</text>
<text x="1858.59" y="361" textLength="45.94" lengthAdjust="spacingAndGlyphs" fill="#000">1.18800</text>
<text x="1858.59" y="410" textLength="45.92" lengthAdjust="spacingAndGlyphs" fill="#000">1.17945</text>
<text x="1858.59" y="459" textLength="45.94" lengthAdjust="spacingAndGlyphs" fill="#000">1.17090</text>
<text x="1858.59" y="508" textLength="45.92" lengthAdjust="spacingAndGlyphs" fill="#000">1.16235</text>
<text x="1856.39" y="538" textLength="52.07" lengthAdjust="spacingAndGlyphs" fill="#000">0.002547</text>
<text x="1856.36" y="591" textLength="23.94" lengthAdjust="spacingAndGlyphs" fill="#000">0.00</text>
<text x="1855.01" y="722" textLength="57.51" lengthAdjust="spacingAndGlyphs" fill="#000">-0.005793</text>
<text x="2.24" y="741" textLength="14.19" lengthAdjust="spacingAndGlyphs" fill="#000">16</text>
<text x="20.27" y="741" textLength="19.06" lengthAdjust="spacingAndGlyphs" fill="#000">Feb</text>
<text x="43.00" y="741" textLength="28.50" lengthAdjust="spacingAndGlyphs" fill="#000">2021</text>
<text x="97.46" y="741" textLength="14.58" lengthAdjust="spacingAndGlyphs" fill="#000">17</text>
<text x="115.37" y="741" textLength="19.87" lengthAdjust="spacingAndGlyphs" fill="#000">Feb</text>
<text x="140.31" y="741" textLength="31.81" lengthAdjust="spacingAndGlyphs" fill="#000">12:00</text>
<text x="193.46" y="741" textLength="14.58" lengthAdjust="spacingAndGlyphs" fill="#000">18</text>
<text x="211.37" y="741" textLength="19.87" lengthAdjust="spacingAndGlyphs" fill="#000">Feb</text>
<text x="236.31" y="741" textLength="31.81" lengthAdjust="spacingAndGlyphs" fill="#000">12:00</text>
<text x="289.46" y="741" textLength="14.58" lengthAdjust="spacingAndGlyphs" fill="#000">19</text>
<text x="307.37" y="741" textLength="19.87" lengthAdjust="spacingAndGlyphs" fill="#000">Feb</text>
<text x="332.31" y="741" textLength="31.81" lengthAdjust="spacingAndGlyphs" fill="#000">12:00</text>
<text x="385.62" y="741" textLength="14.32" lengthAdjust="spacingAndGlyphs" fill="#000">22</text>
<text x="403.37" y="741" textLength="19.87" lengthAdjust="spacingAndGlyphs" fill="#000">Feb</text>
<text x="428.29" y="741" textLength="31.84" lengthAdjust="spacingAndGlyphs" fill="#000">08:00</text>
<text x="481.57" y="741" textLength="14.41" lengthAdjust="spacingAndGlyphs" fill="#000">23</text>
<text x="499.37" y="741" textLength="19.87" lengthAdjust="spacingAndGlyphs" fill="#000">Feb</text>
<text x="524.29" y="741" textLength="31.84" lengthAdjust="spacingAndGlyphs" fill="#000">08:00</text>
<text x="577.46" y="741" textLength="14.58" lengthAdjust="spacingAndGlyphs" fill="#000">24</text>
<text x="595.37" y="741" textLength="19.87" lengthAdjust="spacingAndGlyphs" fill="#000">Feb</text>
<text x="620.29" y="741" textLength="31.84" lengthAdjust="spacingAndGlyphs" fill="#000">08:00</text>
<text x="673.62" y="741" textLength="14.32" lengthAdjust="spacingAndGlyphs" fill="#000">25</text>
<text x="691.37" y="741" textLength="19.87" lengthAdjust="spacingAndGlyphs" fill="#000">Feb</text>
<text x="716.29" y="741" textLength="31.84" lengthAdjust="spacingAndGlyphs" fill="#000">08:00</text>
<text x="769.62" y="741" textLength="14.32" lengthAdjust="spacingAndGlyphs" fill="#000">26</text>
<text x="787.37" y="741" textLength="19.87" lengthAdjust="spacingAndGlyphs" fill="#000">Feb</text>
<text x="812.29" y="741" textLength="31.84" lengthAdjust="spacingAndGlyphs" fill="#000">08:00</text>
<text x="866.11" y="741" textLength="6.37" lengthAdjust="spacingAndGlyphs" fill="#000">1</text>
<text x="876.33" y="741" textLength="19.22" lengthAdjust="spacingAndGlyphs" fill="#000">Mar</text>
<text x="899.57" y="741" textLength="31.64" lengthAdjust="spacingAndGlyphs" fill="#000">04:00</text>
<text x="962.30" y="741" textLength="6.80" lengthAdjust="spacingAndGlyphs" fill="#000">2</text>
<text x="972.33" y="741" textLength="19.22" lengthAdjust="spacingAndGlyphs" fill="#000">Mar</text>
<text x="995.57" y="741" textLength="31.64" lengthAdjust="spacingAndGlyphs" fill="#000">04:00</text>
<text x="1058.37" y="741" textLength="6.80" lengthAdjust="spacingAndGlyphs" fill="#000">3</text>
<text x="1068.33" y="741" textLength="19.22" lengthAdjust="spacingAndGlyphs" fill="#000">Mar</text>
<text x="1091.57" y="741" textLength="31.64" lengthAdjust="spacingAndGlyphs" fill="#000">04:00</text>
<text x="1154.57" y="741" textLength="6.43" lengthAdjust="spacingAndGlyphs" fill="#000">4</text>
<text x="1164.33" y="741" textLength="19.22" lengthAdjust="spacingAndGlyphs" fill="#000">Mar</text>
<text x="1187.57" y="741" textLength="31.64" lengthAdjust="spacingAndGlyphs" fill="#000">04:00</text>
<text x="1250.37" y="741" textLength="6.80" lengthAdjust="spacingAndGlyphs" fill="#000">5</text>
<text x="1260.33" y="741" textLength="19.22" lengthAdjust="spacingAndGlyphs" fill="#000">Mar</text>
<text x="1283.57" y="741" textLength="31.64" lengthAdjust="spacingAndGlyphs" fill="#000">04:00</text>
<text x="1346.57" y="741" textLength="6.43" lengthAdjust="spacingAndGlyphs" fill="#000">8</text>
<text x="1356.33" y="741" textLength="19.22" lengthAdjust="spacingAndGlyphs" fill="#000">Mar</text>
<text x="1379.57" y="741" textLength="31.64" lengthAdjust="spacingAndGlyphs" fill="#000">00:00</text>
<text x="1442.30" y="741" textLength="6.80" lengthAdjust="spacingAndGlyphs" fill="#000">9</text>
<text x="1452.33" y="741" textLength="19.22" lengthAdjust="spacingAndGlyphs" fill="#000">Mar</text>
<text x="1475.57" y="741" textLength="31.64" lengthAdjust="spacingAndGlyphs" fill="#000">00:00</text>
</g>
<g font-family='"Liberation Sans", sans-serif' font-size="12.6">
<rect x="1854" y="322" width="56" height="14" fill="#FF0000" shape-rendering="crispEdges"/>
<text x="1859.00" y="334" textLength="46.11" lengthAdjust="spacingAndGlyphs" fill="#FFFFF0">1.19287</text>
<rect x="1854" y="349" width="56" height="14" fill="#FF0000" shape-rendering="crispEdges"/>
<text x="1859.00" y="361" textLength="46.11" lengthAdjust="spacingAndGlyphs" fill="#FFFFF0">1.18821</text>
<rect x="1854" y="374" width="56" height="14" fill="#000000" shape-rendering="crispEdges"/>
<text x="1859.00" y="386" textLength="46.11" lengthAdjust="spacingAndGlyphs" fill="#FFFFF0">1.18366</text>
<rect x="1854" y="403" width="56" height="14" fill="#FF0000" shape-rendering="crispEdges"/>
<text x="1859.00" y="415" textLength="46.11" lengthAdjust="spacingAndGlyphs" fill="#FFFFF0">1.17887</text>
<rect x="1854" y="439" width="56" height="14" fill="#FF0000" shape-rendering="crispEdges"/>
<text x="1859.00" y="451" textLength="46.11" lengthAdjust="spacingAndGlyphs" fill="#FFFFF0">1.17248</text>
</g></svg>
</body></html>
